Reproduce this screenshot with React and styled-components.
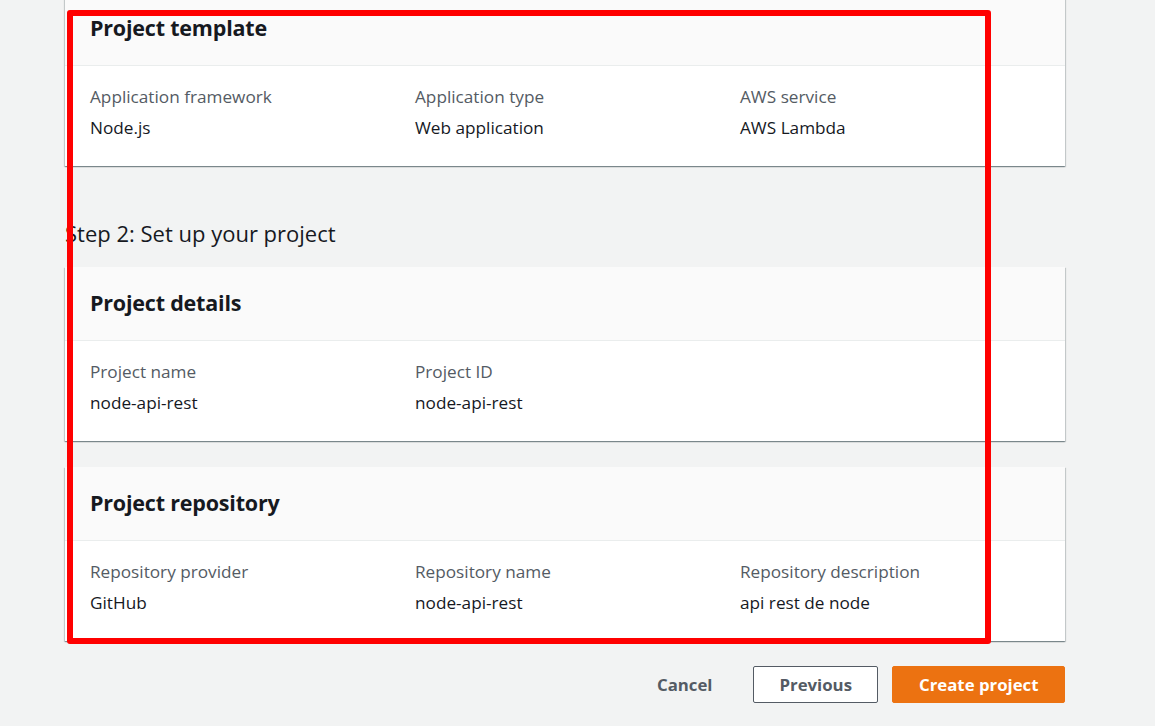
import React from 'react'
import styled, { createGlobalStyle } from 'styled-components'

const GlobalStyle = createGlobalStyle`
  html, body {
    margin: 0;
    padding: 0;
    background: #f2f3f3;
    font-family: 'Open Sans', 'Noto Sans', Arial, sans-serif;
    color: #16191f;
  }
  #root { overflow: hidden; height: 726px; }
`

const Page = styled.div`
  position: relative;
  display: flow-root;
  width: 1000px;
  padding-left: 65px;
`

const Card = styled.section`
  background: #fff;
  margin-top: ${p => p.$top || 0}px;
  box-shadow: 0 1px 1px 0 rgba(0, 28, 36, 0.3), 1px 1px 1px 0 rgba(0, 28, 36, 0.15),
    -1px 1px 1px 0 rgba(0, 28, 36, 0.15);
`

const CardHeader = styled.div`
  height: 74px;
  box-sizing: border-box;
  padding: 0 0 2px 25px;
  background: #fafafa;
  display: flex;
  align-items: center;
  border-bottom: 1px solid #eaeded;
`

const CardTitle = styled.h2`
  margin: 0;
  font-size: 21.5px;
  font-weight: 700;
  letter-spacing: -0.2px;
  color: #16191f;
`

const CardBody = styled.div`
  display: grid;
  grid-template-columns: repeat(3, 1fr);
  column-gap: 20px;
  padding: 20px 20px 0 25px;
  height: 80px;
`

const Field = styled.div`
  display: flex;
  flex-direction: column;
  gap: 9px;
`

const Label = styled.span`
  font-size: 17.2px;
  line-height: 22px;
  color: #545b64;
`

const Value = styled.span`
  font-size: 17.2px;
  line-height: 22px;
  color: #16191f;
`

const StepTitle = styled.h2`
  margin: 53px 0 18px;
  font-size: 22px;
  line-height: 28px;
  padding-bottom: 2px;
  font-weight: 400;
  color: #16191f;
`

const Actions = styled.div`
  display: flex;
  justify-content: flex-end;
  align-items: center;
  gap: 14px;
  margin-top: 25px;
`

const Button = styled.button`
  height: 37px;
  padding: 0 25.5px 1px;
  font-family: inherit;
  font-size: 16.8px;
  font-weight: 700;
  border-radius: 2px;
  cursor: pointer;
  border: 1px solid ${p => (p.$variant === 'primary' ? '#ec7211' : p.$variant === 'normal' ? '#545b64' : 'transparent')};
  background: ${p => (p.$variant === 'primary' ? '#ec7211' : p.$variant === 'normal' ? '#fff' : 'transparent')};
  color: ${p => (p.$variant === 'primary' ? '#fff' : '#545b64')};
`

const Highlight = styled.div`
  position: absolute;
  top: 10px;
  left: 67px;
  width: 924px;
  height: 634px;
  box-sizing: border-box;
  border: 6px solid #ff0000;
  border-radius: 3px;
  pointer-events: none;
`

const sections = [
  {
    title: 'Project template',
    fields: [
      ['Application framework', 'Node.js'],
      ['Application type', 'Web application'],
      ['AWS service', 'AWS Lambda'],
    ],
  },
  {
    title: 'Project details',
    fields: [
      ['Project name', 'node-api-rest'],
      ['Project ID', 'node-api-rest'],
    ],
  },
  {
    title: 'Project repository',
    fields: [
      ['Repository provider', 'GitHub'],
      ['Repository name', 'node-api-rest'],
      ['Repository description', 'api rest de node'],
    ],
  },
]

const Section = ({ data, top }) => (
  <Card $top={top}>
    <CardHeader>
      <CardTitle>{data.title}</CardTitle>
    </CardHeader>
    <CardBody>
      {data.fields.map(([label, value]) => (
        <Field key={label}>
          <Label>{label}</Label>
          <Value>{value}</Value>
        </Field>
      ))}
    </CardBody>
  </Card>
)

const App = () => {
  return (
    <>
      <GlobalStyle />
      <Page>
        <Section data={sections[0]} top={-8} />
        <StepTitle>Step 2: Set up your project</StepTitle>
        <Section data={sections[1]} />
        <Section data={sections[2]} top={26} />
        <Actions>
          <Button $variant="link">Cancel</Button>
          <Button $variant="normal">Previous</Button>
          <Button $variant="primary">Create project</Button>
        </Actions>
        <Highlight />
      </Page>
    </>
  )
}

export default App
